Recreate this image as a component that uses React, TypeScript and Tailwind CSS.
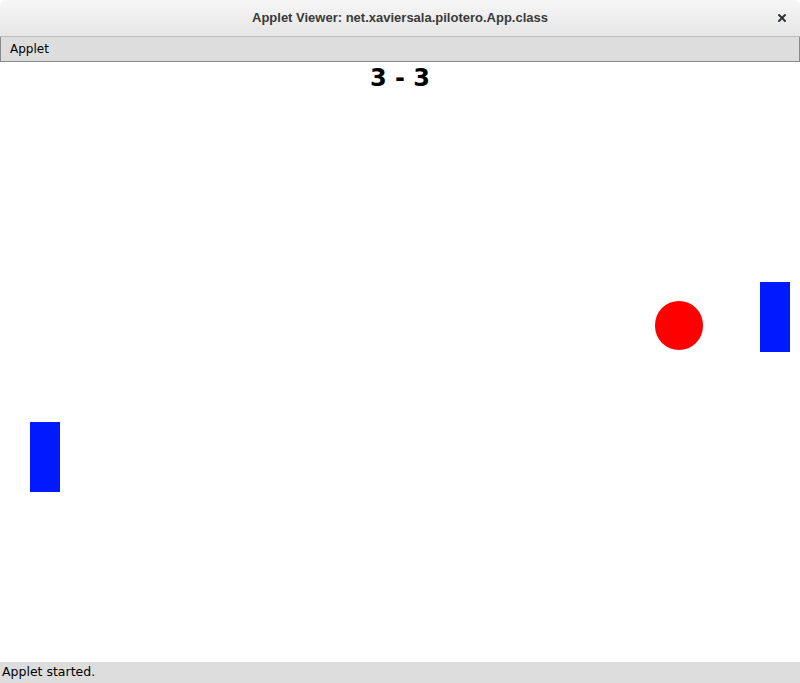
import { X } from "lucide-react";

export default function App() {
  return (
    <div className="w-[800px] h-[683px] flex flex-col bg-white overflow-hidden">
      {/* Window title bar */}
      <div className="relative h-[37px] shrink-0 flex items-center justify-center rounded-t-[6px] bg-gradient-to-b from-[#f6f6f6] to-[#e6e6e6] border-b border-[#bdbdbd]">
        <span className="font-['Liberation_Sans',sans-serif] font-bold text-[13px] text-[#3a3a3a]">
          Applet Viewer: net.xaviersala.pilotero.App.class
        </span>
        <X className="absolute right-[12px] top-[12px] w-[12px] h-[12px] text-[#2e3436]" strokeWidth={4} />
      </div>

      {/* Menu bar */}
      <div className="h-[25px] shrink-0 flex items-center pl-[9px] bg-[#dddddd] border-b border-x border-[#8a8a8a] font-['DejaVu_Sans',sans-serif] text-[12px] text-black">
        Applet
      </div>

      {/* Game canvas */}
      <div className="relative flex-1 bg-white">
        <div className="absolute top-[2px] left-0 right-0 text-center font-['DejaVu_Sans',sans-serif] font-bold text-[24px] leading-[28px] text-black">
          3 - 3
        </div>
        <div className="absolute left-[30px] top-[360px] w-[30px] h-[70px] bg-[#001aff]" />
        <div className="absolute left-[760px] top-[220px] w-[30px] h-[70px] bg-[#001aff]" />
        <div className="absolute left-[655px] top-[239px] w-[48px] h-[49px] rounded-full bg-[#ff0000]" />
      </div>

      {/* Status bar */}
      <div className="h-[21px] shrink-0 flex items-center px-[2px] bg-[#dddddd] font-['DejaVu_Sans',sans-serif] text-[12.5px] text-black">
        Applet started.
      </div>
    </div>
  );
}
